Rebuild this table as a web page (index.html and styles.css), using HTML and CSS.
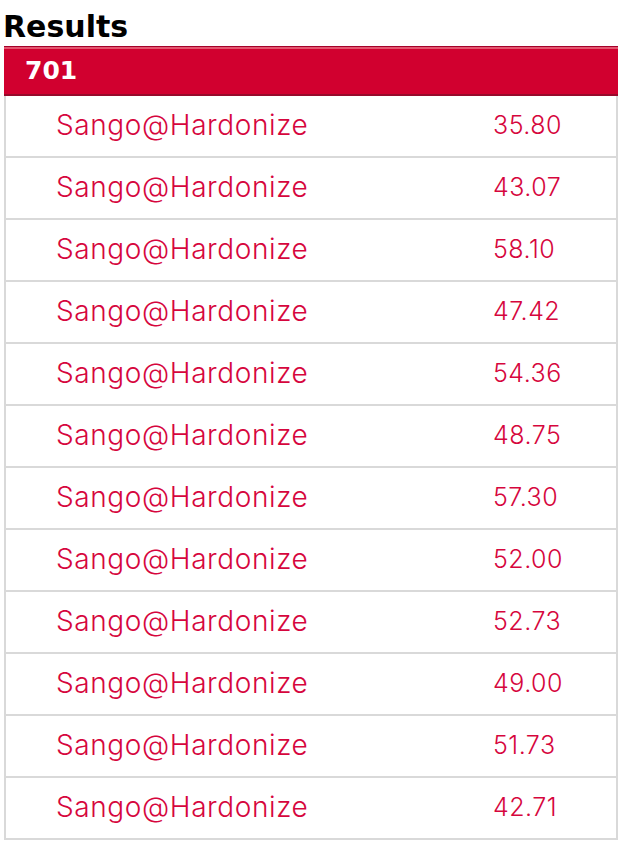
FILE: index.html
```html
<!DOCTYPE html>
<html>
<head>
<meta charset="utf-8">
<link rel="stylesheet" href="styles.css">
</head>
<body>
<h1 class="title">Results</h1>
<div class="results">
  <div class="results-head">701</div>
  <div class="row"><span class="name">Sango@Hardonize</span><span class="score">35.80</span></div>
  <div class="row"><span class="name">Sango@Hardonize</span><span class="score">43.07</span></div>
  <div class="row"><span class="name">Sango@Hardonize</span><span class="score">58.10</span></div>
  <div class="row"><span class="name">Sango@Hardonize</span><span class="score">47.42</span></div>
  <div class="row"><span class="name">Sango@Hardonize</span><span class="score">54.36</span></div>
  <div class="row"><span class="name">Sango@Hardonize</span><span class="score">48.75</span></div>
  <div class="row"><span class="name">Sango@Hardonize</span><span class="score">57.30</span></div>
  <div class="row"><span class="name">Sango@Hardonize</span><span class="score">52.00</span></div>
  <div class="row"><span class="name">Sango@Hardonize</span><span class="score">52.73</span></div>
  <div class="row"><span class="name">Sango@Hardonize</span><span class="score">49.00</span></div>
  <div class="row"><span class="name">Sango@Hardonize</span><span class="score">51.73</span></div>
  <div class="row"><span class="name">Sango@Hardonize</span><span class="score">42.71</span></div>
</div>
</body>
</html>
```
FILE: styles.css
```css
html, body {
  margin: 0;
  padding: 0;
  background: #ffffff;
}
body {
  font-family: "Inter", "DejaVu Sans", sans-serif;
  padding-top: 9px;
}
.title {
  margin: 0 0 1px 3px;
  font-family: "DejaVu Sans", sans-serif;
  font-size: 30px;
  line-height: 36px;
  font-weight: bold;
  color: #000;
}
.results {
  width: 614px;
  margin-left: 4px;
}
.results-head {
  box-sizing: border-box;
  height: 50px;
  background: #d1002f;
  border-top: 1px solid #a3002a;
  border-bottom: 2px solid #970a2b;
  box-shadow: inset 0 2px 0 #e3566f;
  color: #fff;
  font-family: "DejaVu Sans", sans-serif;
  font-size: 25px;
  font-weight: bold;
  line-height: 47px;
  padding-left: 21px;
}
.row {
  display: flex;
  align-items: center;
  height: 60px;
  padding-bottom: 2px;
  box-sizing: border-box;
  height: 62px;
  border-left: 2px solid #d9d9d9;
  border-right: 2px solid #d9d9d9;
  border-bottom: 2px solid #d9d9d9;
  color: #d6063d;
}
.name {
  font-size: 28px;
  letter-spacing: 0.6px;
  font-weight: 300;
  padding-left: 50px;
  width: 437px;
  flex: none;
}
.score {
  font-size: 25px;
  letter-spacing: 0.5px;
  font-weight: 300;
}
```
